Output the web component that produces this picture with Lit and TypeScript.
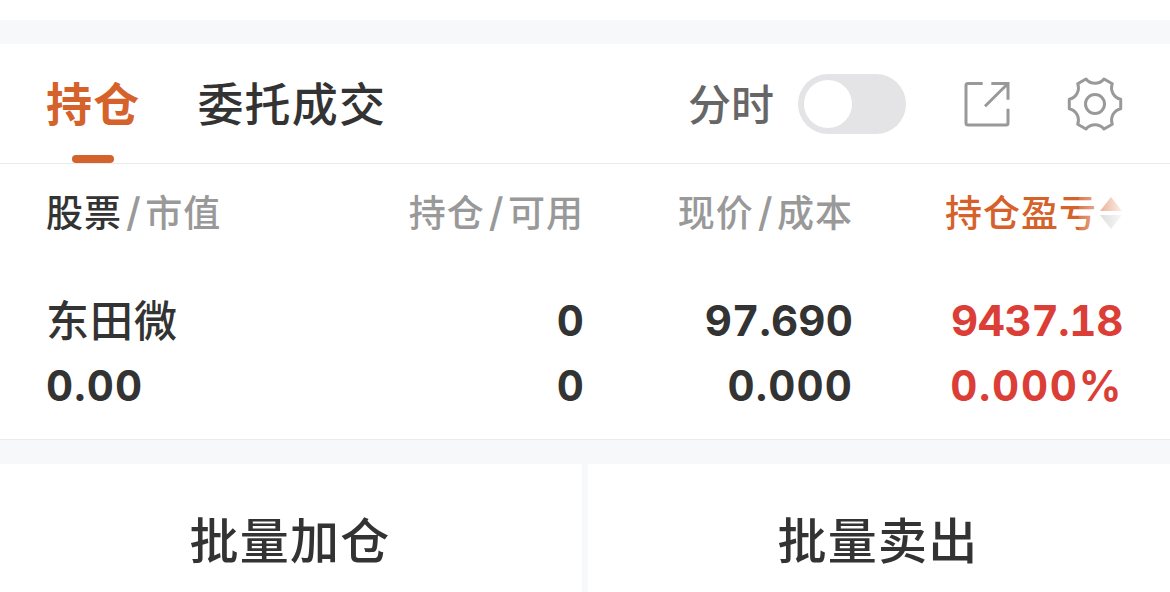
import { LitElement, css, html } from 'lit';
import { customElement, state } from 'lit/decorators.js';

interface Holding {
  name: string;
  value: string;
  position: string;
  available: string;
  price: string;
  cost: string;
  profit: string;
  rate: string;
}

@customElement('app-root')
export class AppRoot extends LitElement {
  static styles = css`
    :host {
      display: block;
      height: 592px;
      overflow: hidden;
      box-sizing: border-box;
      padding-top: 20px;
      background: #fff;
      color: #333;
      font-family: Inter, 'Noto Sans CJK SC', sans-serif;
    }

    * {
      box-sizing: border-box;
    }

    .band {
      height: 24px;
      background: #f7f8fa;
    }

    .tabs {
      display: flex;
      align-items: center;
      height: 120px;
      padding: 0 46px;
      border-bottom: 1px solid #ebebeb;
    }

    .tab {
      display: flex;
      flex-direction: column;
      align-items: center;
      height: 119px;
      margin-right: 57px;
      padding-top: 26px;
      font-size: 46px;
      font-weight: 500;
      line-height: 68px;
      letter-spacing: 1.2px;
      white-space: nowrap;
    }

    .tab.active {
      color: #d5622b;
      font-weight: 700;
    }

    .tab.active::after {
      content: '';
      width: 42px;
      height: 8px;
      margin-top: 17px;
      border-radius: 4px;
      background: #d5622b;
    }

    .tools {
      display: flex;
      align-items: center;
      margin-left: auto;
    }

    .label {
      margin-right: 24px;
      padding-top: 2px;
      color: #666;
      font-size: 43px;
      font-weight: 500;
      line-height: 64px;
    }

    .switch {
      display: flex;
      align-items: center;
      width: 108px;
      height: 60px;
      padding: 0 6px;
      border: 0;
      border-radius: 30px;
      background: #e4e4e6;
    }

    .switch.on {
      justify-content: flex-end;
      background: #d5622b;
    }

    .knob {
      width: 48px;
      height: 48px;
      border-radius: 50%;
      background: #fff;
    }

    svg {
      display: block;
      fill: none;
      stroke: #999;
      stroke-width: 3;
    }

    .share {
      margin-left: 56px;
    }

    .gear {
      margin-left: 54px;
    }

    .row {
      display: grid;
      grid-template-columns: 270px 268px 269px 270px;
      padding: 0 46px;
      text-align: right;
      white-space: nowrap;
    }

    .row > :first-child {
      text-align: left;
    }

    .head {
      height: 100px;
      padding-top: 22px;
      color: #999;
      font-size: 37px;
      font-weight: 500;
      line-height: 55px;
      letter-spacing: 1px;
    }

    .slash {
      margin: 0 3.5px 0 4px;
      font-size: 40px;
      line-height: 1;
    }

    .head b {
      color: #333;
      font-weight: 500;
    }

    .sorted {
      position: relative;
      display: flex;
      align-items: center;
      justify-content: flex-end;
      gap: 2px;
      height: 55px;
      color: #d5622b;
    }

    .sort {
      margin-top: -2px;
      stroke: none;
    }

    .sorted::after {
      content: '';
      position: absolute;
      top: 0;
      right: -2px;
      width: 46px;
      height: 55px;
      background: linear-gradient(90deg, rgba(255, 255, 255, 0.15), rgba(255, 255, 255, 0.95));
    }

    .body {
      height: 176px;
      padding-top: 24px;
      border-bottom: 1px solid #ebebeb;
      font-size: 42px;
      font-weight: 750;
      font-variant-numeric: tabular-nums;
      line-height: 65px;
      letter-spacing: 0.2px;
    }

    .body .name {
      height: 65px;
      padding-top: 1px;
      font-size: 43px;
      font-weight: 500;
      letter-spacing: 1px;
    }

    .sub {
      letter-spacing: 1.1px;
    }

    .up {
      color: #db3e36;
      letter-spacing: -0.3px;
    }

    .up .sub {
      letter-spacing: 1.7px;
    }

    .actions {
      display: grid;
      grid-template-columns: 1fr 1fr;
      gap: 6px;
      height: 128px;
      background: #f7f8fa;
    }

    .action {
      padding: 28px 2px 0 0;
      border: 0;
      background: #fff;
      color: inherit;
      font: 500 49px/1.5 Inter, 'Noto Sans CJK SC', sans-serif;
      letter-spacing: 1.2px;
    }
  `;

  @state() private realtime = false;

  private holdings: Holding[] = [
    {
      name: '东田微',
      value: '0.00',
      position: '0',
      available: '0',
      price: '97.690',
      cost: '0.000',
      profit: '9437.18',
      rate: '0.000%'
    }
  ];

  private toggle() {
    this.realtime = !this.realtime;
  }

  private renderTabs() {
    return html`
      <nav class="tabs">
        <div class="tab active">持仓</div>
        <div class="tab">委托成交</div>
        <div class="tools">
          <span class="label">分时</span>
          <button class="switch ${this.realtime ? 'on' : ''}" @click=${this.toggle}>
            <span class="knob"></span>
          </button>
          <svg class="share" width="50" height="50" viewBox="0 0 50 50">
            <path d="M20.7 4.500H6Q4 4.500 4 6.500V44Q4 46 6 46H44Q46 46 46 44V29.800" />
            <path d="M29.300 4.500H46V20.800M46 4.500L23 27.200" />
          </svg>
          <svg class="gear" width="58" height="58" viewBox="-29 -29 58 58">
            <path
              stroke-linejoin="round"
              d="M-9-25A11.600 11.600 0 0 0 9-25L17.300-20.200A11.600 11.600 0 0 0 25.700-4.800V4.800A11.600 11.600 0 0 0 17.300 20.200L9 25A11.600 11.600 0 0 0-9 25L-17.300 20.200A11.600 11.600 0 0 0-25.700 4.800V-4.800A11.600 11.600 0 0 0-17.300-20.200Z"
            />
            <circle r="9.500" />
          </svg>
        </div>
      </nav>
    `;
  }

  private renderHead() {
    return html`
      <div class="row head">
        <div><b>股票</b><span class="slash">/</span>市值</div>
        <div>持仓<span class="slash">/</span>可用</div>
        <div>现价<span class="slash">/</span>成本</div>
        <div class="sorted">
          持仓盈亏
          <svg class="sort" width="24" height="34" viewBox="0 0 24 34">
            <path fill="#d5622b" d="M12 1L23 15H1Z" />
            <path fill="#bbb" d="M1 19H23L12 33Z" />
          </svg>
        </div>
      </div>
    `;
  }

  render() {
    return html`
      <div class="band"></div>
      ${this.renderTabs()} ${this.renderHead()}
      ${this.holdings.map(
        (h) => html`
          <div class="row body">
            <div>
              <div class="name">${h.name}</div>
              <div class="sub">${h.value}</div>
            </div>
            <div>
              <div>${h.position}</div>
              <div>${h.available}</div>
            </div>
            <div>
              <div>${h.price}</div>
              <div class="sub">${h.cost}</div>
            </div>
            <div class="up">
              <div>${h.profit}</div>
              <div class="sub">${h.rate}</div>
            </div>
          </div>
        `
      )}
      <div class="band"></div>
      <div class="actions">
        <button class="action">批量加仓</button>
        <button class="action">批量卖出</button>
      </div>
    `;
  }
}
